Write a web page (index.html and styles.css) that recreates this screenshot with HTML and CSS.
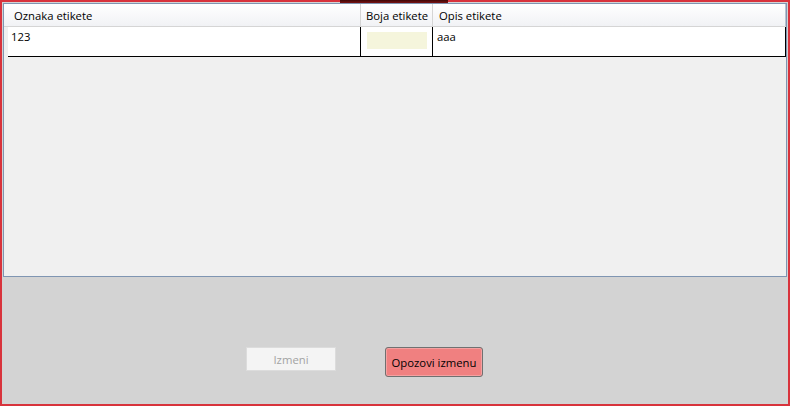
FILE: index.html
```html
<!DOCTYPE html>
<html>
<head>
<meta charset="utf-8">
<link rel="stylesheet" href="styles.css">
</head>
<body>
<div class="window">
  <div class="topbar"></div>
  <div class="panel">
    <div class="grid">
      <div class="header">
        <div class="rowhead"></div>
        <div class="hcell c1">Oznaka etikete</div>
        <div class="hcell c2">Boja etikete</div>
        <div class="hcell c3">Opis etikete</div>
      </div>
      <div class="row">
        <div class="rowhead"></div>
        <div class="cell c1">123</div>
        <div class="cell c2"><div class="swatch"></div></div>
        <div class="cell c3">aaa</div>
      </div>
    </div>
  </div>
  <div class="footer">
    <button class="btn btn-disabled" disabled>Izmeni</button>
    <button class="btn btn-cancel">Opozovi izmenu</button>
  </div>
</div>
</body>
</html>
```

FILE: styles.css
```css
* { box-sizing: border-box; }
html, body { margin: 0; padding: 0; }
body {
  width: 790px;
  height: 406px;
  overflow: hidden;
  font-family: "Open Sans", "Noto Sans", sans-serif;
  font-size: 11.3px;
  color: #000;
}
.window {
  position: relative;
  width: 790px;
  height: 406px;
  border: 2px solid #d8333c;
  padding: 1px;
  background: #d3d3d3;
  display: flex;
  flex-direction: column;
}
.topbar {
  position: absolute;
  left: 338px;
  top: -2px;
  width: 108px;
  height: 3px;
  background: linear-gradient(#3e0606, #7a1414);
}
.panel {
  height: 274px;
  border: 1px solid #7f95b2;
  background: #f0f0f0;
  flex: none;
}
.header {
  display: flex;
  height: 23px;
  background: linear-gradient(#ffffff, #f1f2f5);
  border-bottom: 1px solid #d5d5d5;
}
.rowhead { width: 4px; flex: none; }
.hcell {
  display: flex;
  align-items: center;
  padding-left: 6px;
  border-right: 1px solid #d5d5d5;
}
.cell {
  background: #fff;
  border-right: 1px solid #000;
  border-bottom: 1px solid #000;
  padding: 2px 0 0 3px;
}
.header .c1, .row .c1 { width: 353px; flex: none; }
.header .c2, .row .c2 { width: 72px; flex: none; }
.header .c3, .row .c3 { flex: 1 1 auto; }
.hcell.c2 { padding-left: 5px; }
.hcell.c3 { border-right: 1px solid #b9c3cf; }
.row {
  display: flex;
  height: 30px;
}
.cell.c2 { padding: 5px 0 0 6px; }
.cell.c3 { padding-left: 4px; }
.swatch {
  width: 60px;
  height: 17px;
  background: #f5f5dc;
}
.footer {
  flex: 1;
  display: flex;
  align-items: flex-start;
  padding: 70px 0 0 243px;
  gap: 49px;
}
.btn {
  font-family: inherit;
  font-size: 11.3px;
  margin: 0;
  padding: 0;
}
.btn-disabled {
  width: 90px;
  height: 24px;
  background: #f4f4f4;
  border: 1px solid #dcdcdc;
  color: #a3a3a3;
}
.btn-cancel {
  width: 98px;
  height: 30px;
  background: #f08080;
  border: 1px solid #707070;
  border-radius: 3px;
  color: #000;
  box-shadow: inset 0 0 0 1px rgba(255,255,255,0.25);
}
```
